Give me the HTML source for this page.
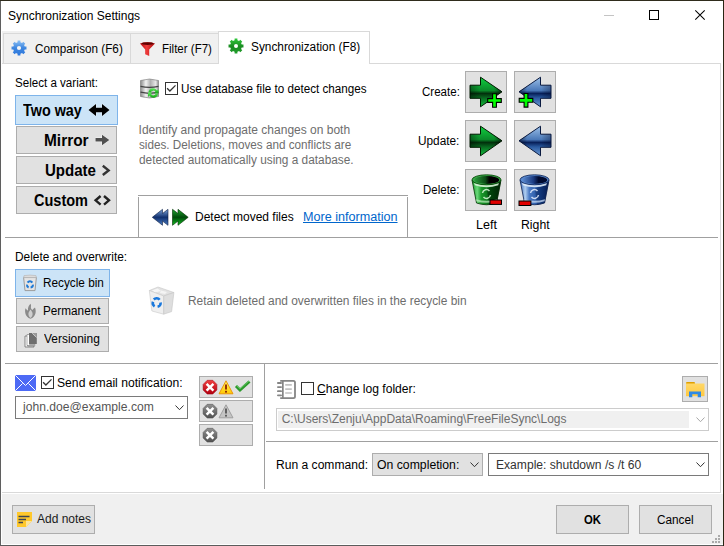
<!DOCTYPE html>
<html><head><meta charset="utf-8">
<style>
*{box-sizing:border-box}
html,body{margin:0;padding:0}
body{width:724px;height:546px;position:relative;overflow:hidden;background:#fff;font-family:"Liberation Sans",sans-serif;font-size:12px;color:#000}
.a{position:absolute}
.t{position:absolute;white-space:nowrap;font-size:12px;line-height:14px;color:#000;transform-origin:0 0}
.b{font-weight:bold;font-size:16px;line-height:18px}
.g{color:#6d6d6d}
.btn{position:absolute;background:#e1e1e1;border:1px solid #adadad}
.sel{position:absolute;background:#cce4f7;border:1px solid #7eb4ea}
.sep{position:absolute;background:#a0a0a0;height:1px}
.cb{position:absolute;width:13px;height:13px;border:1px solid #333;background:#fff}
svg{position:absolute;overflow:visible}
</style></head><body>
<!-- window frame -->
<div class="a" style="left:0;top:0;width:1px;height:546px;background:#5f5f5f"></div>
<div class="a" style="left:0;top:0;width:724px;height:1px;background:#2f2c1c"></div>
<div class="a" style="left:723px;top:0;width:1px;height:546px;background:#2a2614"></div>
<div class="a" style="left:0;top:545px;width:723px;height:1px;background:#5c5c5c"></div>

<!-- title bar -->
<div class="t" style="left:8px;top:9px">Synchronization Settings</div>
<div class="a" style="left:604px;top:15px;width:10px;height:1px;background:#c4c4c4"></div>
<div class="a" style="left:649px;top:10px;width:10px;height:10px;border:1px solid #000"></div>
<svg style="left:695px;top:10px" width="10" height="10" viewBox="0 0 10 10"><path d="M0.3 0.3L9.7 9.7M9.7 0.3L0.3 9.7" stroke="#000" stroke-width="1.05"/></svg>

<!-- tabs -->
<div class="a" style="left:2px;top:31px;width:217px;height:33px;background:#f0f0f0"></div>
<div class="a" style="left:3px;top:33px;width:128px;height:31px;border:1px solid #d9d9d9;background:#f0f0f0"></div>
<div class="a" style="left:130px;top:33px;width:89px;height:31px;border:1px solid #d9d9d9;background:#f0f0f0"></div>
<div class="a" style="left:2px;top:63px;width:719px;height:430px;border:1px solid #d9d9d9;border-left:none;background:#fff"></div>
<div class="a" style="left:218px;top:31px;width:152px;height:33px;border:1px solid #d9d9d9;border-bottom:none;background:#fff"></div>

<svg style="left:11.3px;top:40.3px" width="16" height="16" viewBox="0 0 16 16">
 <defs><linearGradient id="gb" x1="0" y1="0" x2="0" y2="1"><stop offset="0" stop-color="#8cc0f4"/><stop offset=".5" stop-color="#3d86e0"/><stop offset="1" stop-color="#2f78dc"/></linearGradient></defs>
 <path fill="url(#gb)" d="M6.58 2.27 L6.62 0.53 L9.38 0.53 L9.42 2.27 L11.04 2.95 L12.31 1.74 L14.26 3.69 L13.05 4.96 L13.73 6.58 L15.47 6.62 L15.47 9.38 L13.73 9.42 L13.05 11.04 L14.26 12.31 L12.31 14.26 L11.04 13.05 L9.42 13.73 L9.38 15.47 L6.62 15.47 L6.58 13.73 L4.96 13.05 L3.69 14.26 L1.74 12.31 L2.95 11.04 L2.27 9.42 L0.53 9.38 L0.53 6.62 L2.27 6.58 L2.95 4.96 L1.74 3.69 L3.69 1.74 L4.96 2.95Z"/>
 <circle cx="8" cy="8" r="2.1" fill="#f4f4f4"/>
</svg>
<div class="t" style="left:35px;top:42px;transform:scaleX(.975)">Comparison (F6)</div>
<svg style="left:139px;top:40px" width="17" height="17" viewBox="0 0 17 17">
 <defs><linearGradient id="fr" x1="0" y1="0" x2="1" y2="0"><stop offset="0" stop-color="#b80c10"/><stop offset=".45" stop-color="#f03c3c"/><stop offset="1" stop-color="#a80808"/></linearGradient></defs>
 <path fill="url(#fr)" d="M1 3.5 Q8.5 1 16 3.5 L10.2 9.5 L10.2 16 L6.2 14.2 L6.2 9.5Z"/>
 <ellipse cx="8.5" cy="3.6" rx="6" ry="1.4" fill="#600000"/>
</svg>
<div class="t" style="left:162px;top:42px;transform:scaleX(.96)">Filter (F7)</div>
<svg style="left:228px;top:38px" width="16" height="16" viewBox="0 0 16 16">
 <defs><linearGradient id="gg" x1="0" y1="0" x2="0" y2="1"><stop offset="0" stop-color="#2fc83a"/><stop offset=".55" stop-color="#1a8a22"/><stop offset="1" stop-color="#22a02c"/></linearGradient></defs>
 <path fill="url(#gg)" d="M6.58 2.27 L6.62 0.53 L9.38 0.53 L9.42 2.27 L11.04 2.95 L12.31 1.74 L14.26 3.69 L13.05 4.96 L13.73 6.58 L15.47 6.62 L15.47 9.38 L13.73 9.42 L13.05 11.04 L14.26 12.31 L12.31 14.26 L11.04 13.05 L9.42 13.73 L9.38 15.47 L6.62 15.47 L6.58 13.73 L4.96 13.05 L3.69 14.26 L1.74 12.31 L2.95 11.04 L2.27 9.42 L0.53 9.38 L0.53 6.62 L2.27 6.58 L2.95 4.96 L1.74 3.69 L3.69 1.74 L4.96 2.95Z"/>
 <circle cx="8" cy="8" r="2" fill="#fff"/>
</svg>
<div class="t" style="left:251.1px;top:40px;transform:scaleX(.987)">Synchronization (F8)</div>

<!-- ============ SECTION 1 ============ -->
<div class="t" style="left:15.3px;top:76px;transform:scaleX(.965)">Select a variant:</div>

<div class="sel" style="left:15px;top:95px;width:103px;height:30px"></div>
<div class="t b" style="left:23.3px;top:102px;transform:scaleX(.898)">Two way</div>
<svg style="left:88px;top:104px" width="22" height="12" viewBox="0 0 22 12"><path d="M0.5 6 L8 0 L8 3.7 L14 3.7 L14 0 L21.5 6 L14 12 L14 8.3 L8 8.3 L8 12Z" fill="#000" stroke="#fff" stroke-width=".6" stroke-opacity=".6" paint-order="stroke"/></svg>

<div class="btn" style="left:16px;top:126px;width:101px;height:28px"></div>
<div class="t b" style="left:44.4px;top:132px;transform:scaleX(.964)">Mirror</div>
<svg style="left:95px;top:134px" width="15" height="12" viewBox="0 0 15 12"><path d="M0.5 4 L7 4 L7 0.8 L14.3 6 L7 11.2 L7 7.6 L0.5 7.6Z" fill="#505050" stroke="#fafafa" stroke-width=".8" paint-order="stroke"/></svg>

<div class="btn" style="left:16px;top:156px;width:101px;height:28px"></div>
<div class="t b" style="left:44.5px;top:162px;transform:scaleX(.94)">Update</div>
<svg style="left:101px;top:164px" width="10" height="13" viewBox="0 0 10 13"><path d="M1.8 1.8 L7.6 6.4 L1.8 11" fill="none" stroke="#333" stroke-width="2.4" stroke-linejoin="miter"/></svg>

<div class="btn" style="left:16px;top:186px;width:101px;height:28px"></div>
<div class="t b" style="left:33.9px;top:192px;transform:scaleX(.907)">Custom</div>
<svg style="left:94px;top:195px" width="17" height="11" viewBox="0 0 17 11"><path d="M6.6 1 L1.6 5.3 L6.6 9.6 M10 1 L15 5.3 L10 9.6" fill="none" stroke="#222" stroke-width="2.4"/></svg>

<!-- database -->
<svg style="left:140px;top:78px" width="19" height="21" viewBox="0 0 19 21">
 <defs>
  <linearGradient id="dbg" x1="0" y1="0" x2="1" y2="0"><stop offset="0" stop-color="#8a8a8a"/><stop offset=".3" stop-color="#f2f2f2"/><stop offset=".55" stop-color="#b0b0b0"/><stop offset=".85" stop-color="#e8e8e8"/><stop offset="1" stop-color="#8a8a8a"/></linearGradient>
  <linearGradient id="sg" x1="0" y1="0" x2="0" y2="1"><stop offset="0" stop-color="#60ee60"/><stop offset="1" stop-color="#10a010"/></linearGradient>
 </defs>
 <path d="M0.5 2.5 Q9.5 -0.5 18.5 2.5 L18.5 18.5 Q9.5 21.5 0.5 18.5Z" fill="url(#dbg)" stroke="#777" stroke-width=".6"/>
 <path d="M0.5 8.3 Q9.5 10.5 18.5 8.3" fill="none" stroke="#444" stroke-width="1.3"/>
 <path d="M0.5 14.2 Q9.5 16.4 18.5 14.2" fill="none" stroke="#444" stroke-width="1.3"/>
 <path d="M8.5 14 A4.6 4.6 0 0 1 17 12.5 L18.5 11 L18.5 15.5 L14 15.5 L15.5 14 A2.6 2.6 0 0 0 10.7 14.5Z" fill="url(#sg)"/>
 <path d="M18 16 A4.6 4.6 0 0 1 9.5 17.5 L8 19 L8 14.5 L12.5 14.5 L11 16 A2.6 2.6 0 0 0 15.8 15.5Z" fill="url(#sg)"/>
</svg>
<div class="cb" style="left:165px;top:82px"></div>
<svg style="left:165px;top:82px" width="13" height="13" viewBox="0 0 13 13"><path d="M2.1 6.2 L4.9 9 L10.5 3.4" stroke="#333" stroke-width="1.3" fill="none"/></svg>
<div class="t" style="left:180.8px;top:82px;transform:scaleX(.973)">Use database file to detect changes</div>

<div class="t g" style="left:138.6px;top:123px">Identify and propagate changes on both</div>
<div class="t g" style="left:138.6px;top:138px;transform:scaleX(.976)">sides. Deletions, moves and conflicts are</div>
<div class="t g" style="left:138.6px;top:153px;transform:scaleX(.987)">detected automatically using a database.</div>

<div class="a" style="left:138px;top:195px;width:270px;height:1px;background:#a0a0a0"></div>
<div class="a" style="left:138px;top:197px;width:1px;height:40px;background:#a0a0a0"></div>
<div class="a" style="left:407px;top:197px;width:1px;height:40px;background:#a0a0a0"></div>
<svg style="left:152px;top:209px" width="17" height="17" viewBox="0 0 17 17">
 <defs><linearGradient id="bl" x1="0" y1="0" x2="0" y2="1"><stop offset="0" stop-color="#7ea6dc"/><stop offset=".5" stop-color="#10306e"/><stop offset="1" stop-color="#4a7cc4"/></linearGradient></defs>
 <path d="M0.3 8.3 L10.5 0.3 L10.5 4.5 L16 0.3 L16 16.3 L10.5 12.1 L10.5 16.3Z" fill="url(#bl)" stroke="#0c1c40" stroke-width=".6"/>
</svg>
<svg style="left:172px;top:209px" width="17" height="17" viewBox="0 0 17 17">
 <defs><linearGradient id="gr" x1="0" y1="0" x2="0" y2="1"><stop offset="0" stop-color="#20a830"/><stop offset=".5" stop-color="#004a0a"/><stop offset="1" stop-color="#10c020"/></linearGradient></defs>
 <path d="M16.2 8.3 L6 0.3 L6 4.5 L0.5 0.3 L0.5 16.3 L6 12.1 L6 16.3Z" fill="url(#gr)" stroke="#002a00" stroke-width=".6"/>
</svg>
<div class="t" style="left:195px;top:210px">Detect moved files</div>
<div class="t" style="left:302.9px;top:210px;color:#0066cc;text-decoration:underline;transform:scaleX(1.05)">More information</div>

<div class="t" style="left:421.6px;top:85px;transform:scaleX(.962)">Create:</div>
<div class="t" style="left:417.8px;top:134px;transform:scaleX(.985)">Update:</div>
<div class="t" style="left:422.7px;top:183px;transform:scaleX(.958)">Delete:</div>

<svg width="0" height="0" style="left:0;top:0">
 <defs>
  <linearGradient id="ag" x1="0" y1="0" x2="0" y2="1"><stop offset="0" stop-color="#10d040"/><stop offset=".45" stop-color="#0a8a2a"/><stop offset=".55" stop-color="#02300c"/><stop offset=".7" stop-color="#086a20"/><stop offset="1" stop-color="#14c040"/></linearGradient>
  <linearGradient id="ab" x1="0" y1="0" x2="0" y2="1"><stop offset="0" stop-color="#9cc0e8"/><stop offset=".45" stop-color="#4a78b8"/><stop offset=".55" stop-color="#08205a"/><stop offset=".7" stop-color="#2a5aa0"/><stop offset="1" stop-color="#6e9ad4"/></linearGradient>
  <linearGradient id="agh" x1="0" y1="0" x2="1" y2="0"><stop offset="0" stop-color="#000" stop-opacity=".35"/><stop offset=".3" stop-color="#000" stop-opacity="0"/><stop offset=".75" stop-color="#000" stop-opacity="0"/><stop offset="1" stop-color="#000" stop-opacity=".55"/></linearGradient>
  <linearGradient id="abh" x1="0" y1="0" x2="1" y2="0"><stop offset="0" stop-color="#000a30" stop-opacity=".55"/><stop offset=".25" stop-color="#000" stop-opacity="0"/><stop offset=".7" stop-color="#000" stop-opacity="0"/><stop offset="1" stop-color="#000a30" stop-opacity=".35"/></linearGradient>
  <linearGradient id="tg" x1="0" y1="0" x2="1" y2="0"><stop offset="0" stop-color="#1a9a2a"/><stop offset=".3" stop-color="#5ad06a"/><stop offset=".6" stop-color="#0a7a1a"/><stop offset="1" stop-color="#003a08"/></linearGradient>
  <linearGradient id="tb" x1="0" y1="0" x2="1" y2="0"><stop offset="0" stop-color="#3a6ab8"/><stop offset=".3" stop-color="#9abce8"/><stop offset=".6" stop-color="#2a5aa8"/><stop offset="1" stop-color="#0a2a6a"/></linearGradient>
 </defs>
</svg>

<div class="btn" style="left:465px;top:71px;width:42px;height:42px"></div>
<svg style="left:465px;top:71px" width="42" height="42" viewBox="0 0 42 42">
 <path d="M5 14.2 L15.5 14.2 L15.5 6.2 L37 20.8 L15.5 35.8 L15.5 27.3 L5 27.3Z" fill="url(#ag)" stroke="#001a00" stroke-width="1"/>
 <path d="M5 14.2 L15.5 14.2 L15.5 6.2 L37 20.8 L15.5 35.8 L15.5 27.3 L5 27.3Z" fill="url(#agh)"/>
 <path d="M27.6 22.7 h3.8 v4.9 h4.9 v3.8 h-4.9 v4.9 h-3.8 v-4.9 h-4.9 v-3.8 h4.9Z" fill="#00ff00" stroke="#000" stroke-width="1.1"/>
</svg>
<div class="btn" style="left:514px;top:71px;width:42px;height:42px"></div>
<svg style="left:514px;top:71px" width="42" height="42" viewBox="0 0 42 42">
 <path d="M37 14.2 L26.5 14.2 L26.5 6.2 L5 20.8 L26.5 35.8 L26.5 27.3 L37 27.3Z" fill="url(#ab)" stroke="#0a1a40" stroke-width="1"/>
 <path d="M37 14.2 L26.5 14.2 L26.5 6.2 L5 20.8 L26.5 35.8 L26.5 27.3 L37 27.3Z" fill="url(#abh)"/>
 <path d="M10.1 22.5 h3.8 v4.9 h4.9 v3.8 h-4.9 v4.9 h-3.8 v-4.9 h-4.9 v-3.8 h4.9Z" fill="#00ff00" stroke="#000" stroke-width="1.1"/>
</svg>
<div class="btn" style="left:465px;top:120px;width:42px;height:42px"></div>
<svg style="left:465px;top:120px" width="42" height="42" viewBox="0 0 42 42">
 <path d="M5 14.2 L15.5 14.2 L15.5 6.2 L37 20.8 L15.5 35.8 L15.5 27.3 L5 27.3Z" fill="url(#ag)" stroke="#001a00" stroke-width="1"/>
 <path d="M5 14.2 L15.5 14.2 L15.5 6.2 L37 20.8 L15.5 35.8 L15.5 27.3 L5 27.3Z" fill="url(#agh)"/>
</svg>
<div class="btn" style="left:514px;top:120px;width:42px;height:42px"></div>
<svg style="left:514px;top:120px" width="42" height="42" viewBox="0 0 42 42">
 <path d="M37 14.2 L26.5 14.2 L26.5 6.2 L5 20.8 L26.5 35.8 L26.5 27.3 L37 27.3Z" fill="url(#ab)" stroke="#0a1a40" stroke-width="1"/>
 <path d="M37 14.2 L26.5 14.2 L26.5 6.2 L5 20.8 L26.5 35.8 L26.5 27.3 L37 27.3Z" fill="url(#abh)"/>
</svg>
<div class="btn" style="left:465px;top:169px;width:42px;height:42px"></div>
<svg style="left:465px;top:169px" width="42" height="42" viewBox="0 0 42 42">
 <defs>
  <linearGradient id="tg2" x1="0" y1="0" x2="1" y2="0"><stop offset="0" stop-color="#1a9a2a"/><stop offset=".18" stop-color="#6ad87a"/><stop offset=".32" stop-color="#1a9a2a"/><stop offset=".7" stop-color="#005a10"/><stop offset="1" stop-color="#002a06"/></linearGradient>
  <linearGradient id="to2" x1="0" y1="0" x2="1" y2="0"><stop offset="0" stop-color="#2a9a3a"/><stop offset=".45" stop-color="#0a4a14"/><stop offset=".6" stop-color="#000"/><stop offset="1" stop-color="#000"/></linearGradient>
 </defs>
 <path d="M7 11 L11.5 34 Q21.5 37.5 31.5 34 L36 11Z" fill="url(#tg2)" stroke="#003000" stroke-width=".8"/>
 <path d="M22 20 L36 13 L32 34 Q28 35.5 24 36Z" fill="#001a04" opacity=".45"/>
 <path d="M9.3 14 Q21.5 18 33.7 14 L33.3 16.3 Q21.5 20 9.7 16.3Z" fill="#d8f4d8" opacity=".9"/>
 <path d="M11 30.2 Q21.5 33.5 32 30.2 L31.6 32.2 Q21.5 35.5 11.4 32.2Z" fill="#b8e8b8" opacity=".75"/>
 <ellipse cx="21.5" cy="10.8" rx="14.5" ry="5" fill="#3aa84a" stroke="#004000" stroke-width=".8"/>
 <ellipse cx="21.8" cy="11" rx="12.5" ry="3.9" fill="url(#to2)"/>
 <path d="M17.5 24 A4 4 0 0 1 24.5 22 M25.5 26 A4 4 0 0 1 18.5 28" fill="none" stroke="#d8f8d8" stroke-width="1.5" opacity=".85"/>
 <rect x="25" y="31" width="11.5" height="4.4" fill="#e00000" stroke="#000" stroke-width="1"/>
</svg>
<div class="btn" style="left:514px;top:169px;width:42px;height:42px"></div>
<svg style="left:514px;top:169px" width="42" height="42" viewBox="0 0 42 42">
 <defs>
  <linearGradient id="tb2" x1="0" y1="0" x2="1" y2="0"><stop offset="0" stop-color="#3a6ab8"/><stop offset=".18" stop-color="#b0cef0"/><stop offset=".32" stop-color="#4a7ac4"/><stop offset=".7" stop-color="#1a4a98"/><stop offset="1" stop-color="#08205a"/></linearGradient>
  <linearGradient id="to3" x1="0" y1="0" x2="1" y2="0"><stop offset="0" stop-color="#5a8ad0"/><stop offset=".45" stop-color="#1a3a80"/><stop offset=".65" stop-color="#000a30"/><stop offset="1" stop-color="#000a30"/></linearGradient>
 </defs>
 <path d="M6 11 L10.5 34 Q20.5 37.5 30.5 34 L35 11Z" fill="url(#tb2)" stroke="#0a2050" stroke-width=".8"/>
 <path d="M21 20 L35 13 L31 34 Q27 35.5 23 36Z" fill="#001040" opacity=".35"/>
 <path d="M8.3 14 Q20.5 18 32.7 14 L32.3 16.3 Q20.5 20 8.7 16.3Z" fill="#e0ecfa" opacity=".9"/>
 <path d="M10 30.2 Q20.5 33.5 31 30.2 L30.6 32.2 Q20.5 35.5 10.4 32.2Z" fill="#c8dcf4" opacity=".75"/>
 <ellipse cx="20.5" cy="10.8" rx="14.5" ry="5" fill="#5a8ad0" stroke="#0a2050" stroke-width=".8"/>
 <ellipse cx="20.8" cy="11" rx="12.5" ry="3.9" fill="url(#to3)"/>
 <path d="M16.5 24 A4 4 0 0 1 23.5 22 M24.5 26 A4 4 0 0 1 17.5 28" fill="none" stroke="#e8f0ff" stroke-width="1.5" opacity=".85"/>
 <rect x="5" y="32" width="11.9" height="4.5" fill="#e00000" stroke="#000" stroke-width="1"/>
</svg>
<div class="t" style="left:476.2px;top:218px;transform:scaleX(1.047)">Left</div>
<div class="t" style="left:521.2px;top:218px;transform:scaleX(1.022)">Right</div>

<div class="sep" style="left:5px;top:237px;width:713px"></div>

<!-- ============ SECTION 2 ============ -->
<div class="t" style="left:14.7px;top:250px;transform:scaleX(.989)">Delete and overwrite:</div>
<div class="sel" style="left:15px;top:269px;width:95px;height:28px"></div>
<svg style="left:23px;top:275px" width="14" height="16" viewBox="0 0 14 16">
 <path d="M0.6 2.4 L13.4 2.4 L12 15.6 L2 15.6Z" fill="#e4e4e4" stroke="#9c9c9c" stroke-width="1"/>
 <path d="M1 0.6 Q7 -0.4 13 0.6 L13.4 2.6 L0.6 2.6Z" fill="#dcdcdc" stroke="#b4b4b4" stroke-width=".6"/>
 <g fill="none" stroke="#1e7ad6" stroke-width="2">
  <path d="M4.6 7.6 A2.8 2.8 0 0 1 9.3 7.6"/>
  <path d="M9.9 9.6 A2.8 2.8 0 0 1 7.6 12.6"/>
  <path d="M5.6 12.5 A2.8 2.8 0 0 1 4 9.6"/>
 </g>
</svg>
<div class="t" style="left:42.5px;top:276px;transform:scaleX(.982)">Recycle bin</div>
<div class="btn" style="left:16px;top:298px;width:93px;height:26px"></div>
<svg style="left:24px;top:303px" width="13" height="17" viewBox="0 0 13 17">
 <path d="M6.5 0.8 C8 3.5 5.5 5 8.5 7 C9.5 5.5 10.2 5 11 4.5 C12.5 8 12 14 6.5 15.8 C1 14 0.5 8 1.5 5.2 C2.5 6.5 3 7 4 7.5 C3.5 4.5 5 2.5 6.5 0.8Z" fill="#8a8a8a"/>
 <path d="M6.5 6.5 C8.5 9 10 12 6.5 15 C3 12 4.5 9 6.5 6.5Z" fill="#cfcfcf"/>
</svg>
<div class="t" style="left:42.9px;top:304px;transform:scaleX(.979)">Permanent</div>
<div class="btn" style="left:16px;top:326px;width:93px;height:26px"></div>
<svg style="left:24px;top:332px" width="14" height="16" viewBox="0 0 14 16">
 <path d="M1 4 L3.5 4 L3.5 14 L10 14 L10 15 L1 15Z" fill="#fff" stroke="#6a6a6a" stroke-width=".8"/>
 <path d="M3 2.5 L5.5 2.5 L5.5 12.5 L11 12.5 L11 13.5 L3 13.5Z" fill="#fff" stroke="#7a7a7a" stroke-width=".6"/>
 <path d="M5 1 L8.5 1 L12.8 1 L12.8 12 L5 12Z" fill="#6e6e6e"/>
 <path d="M8.5 1 L12.8 5.3 L12.8 1Z" fill="#9a9a9a"/>
 <path d="M8.2 1.2 L12.6 5.4" stroke="#e8e8e8" stroke-width=".8"/>
</svg>
<div class="t" style="left:43.5px;top:332px;transform:scaleX(.996)">Versioning</div>

<svg style="left:149px;top:287px" width="26" height="28" viewBox="0 0 26 28">
 <path d="M0.3 3.5 L9 0 L24.9 5.5 L14.7 9Z" fill="#e2e2e2" stroke="#c8c8c8" stroke-width=".6"/>
 <path d="M3 3.5 L8.5 1.5 L12 4 L6 5.5Z" fill="#f6f6f6"/>
 <path d="M12 3.5 L18 5 L16 7 L11 6Z" fill="#f4f4f4"/>
 <path d="M0.3 3.5 L14.7 9 L14.7 27.2 L2.9 24Z" fill="#efefef" stroke="#cacaca" stroke-width=".6"/>
 <path d="M14.7 9 L24.9 5.5 L22.6 24.6 L14.7 27.2Z" fill="#dedede" stroke="#c4c4c4" stroke-width=".6"/>
 <g fill="none" stroke="#1a78dc" stroke-width="2.6">
  <path d="M4.8 12.5 A3.8 3.8 0 0 1 10.6 12.8"/>
  <path d="M11.6 15.5 A3.8 3.8 0 0 1 8.6 19.8"/>
  <path d="M5.6 19.3 A3.8 3.8 0 0 1 4 14.8"/>
 </g>
</svg>
<div class="t g" style="left:187.6px;top:294px;transform:scaleX(.992)">Retain deleted and overwritten files in the recycle bin</div>

<div class="sep" style="left:5px;top:363px;width:713px"></div>

<!-- ============ SECTION 3 ============ -->
<svg style="left:15px;top:375px" width="21" height="16" viewBox="0 0 21 16">
 <rect x="0" y="0" width="21" height="16" fill="#4d6af5"/>
 <path d="M0.3 0.3 L10.5 10.5 L20.7 0.3 M0.3 15.7 L7.5 8.5 M20.7 15.7 L13.5 8.5" stroke="#fff" stroke-width="1" fill="none"/>
</svg>
<div class="cb" style="left:41px;top:376px"></div>
<svg style="left:41px;top:376px" width="13" height="13" viewBox="0 0 13 13"><path d="M2.1 6.2 L4.9 9 L10.5 3.4" stroke="#333" stroke-width="1.3" fill="none"/></svg>
<div class="t" style="left:56.5px;top:376px;transform:scaleX(1.013)">Send email notification:</div>
<div class="a" style="left:15px;top:396px;width:173px;height:23px;border:1px solid #7a7a7a;background:#fff"></div>
<div class="t" style="left:23.3px;top:400px;color:#555;transform:scaleX(1.009)">john.doe@example.com</div>
<svg style="left:175px;top:405px" width="9" height="6" viewBox="0 0 9 6"><path d="M0.5 0.5 L4.5 4.7 L8.5 0.5" fill="none" stroke="#333" stroke-width="1"/></svg>

<div class="btn" style="left:199px;top:376px;width:54px;height:22px"></div>
<svg style="left:203px;top:380px" width="48" height="15" viewBox="0 0 48 15">
 <defs><linearGradient id="er" x1="0" y1="0" x2="0" y2="1"><stop offset="0" stop-color="#f04040"/><stop offset="1" stop-color="#b00010"/></linearGradient>
 <linearGradient id="wy" x1="0" y1="0" x2="0" y2="1"><stop offset="0" stop-color="#fff060"/><stop offset="1" stop-color="#ffc800"/></linearGradient></defs>
 <path d="M4.2 0.3 L9.8 0.3 L13.9 4.4 L13.9 10 L9.8 14.1 L4.2 14.1 L0.1 10 L0.1 4.4Z" fill="url(#er)" stroke="#a00010" stroke-width=".5"/>
 <path d="M3.6 3.8 L10.4 10.6 M10.4 3.8 L3.6 10.6" stroke="#fff" stroke-width="2.5"/>
 <path d="M23 0.8 L30 13.8 L16 13.8Z" fill="url(#wy)" stroke="#e89000" stroke-width=".9" stroke-linejoin="round"/>
 <path d="M23 4.5 L23 9.5" stroke="#8a2000" stroke-width="1.8"/>
 <rect x="22.1" y="10.8" width="1.8" height="1.8" fill="#8a2000"/>
 <path d="M33 6 L37 10 L46.5 1.5" fill="none" stroke="#2c9a2c" stroke-width="3"/>
 <path d="M33.5 5.5 L37 8.8 L46 1" fill="none" stroke="#70d070" stroke-width="1" opacity=".8"/>
</svg>
<div class="btn" style="left:199px;top:400px;width:54px;height:22px"></div>
<svg style="left:203px;top:404px" width="32" height="15" viewBox="0 0 32 15">
 <defs><linearGradient id="eg" x1="0" y1="0" x2="0" y2="1"><stop offset="0" stop-color="#909090"/><stop offset="1" stop-color="#505050"/></linearGradient></defs>
 <path d="M4.2 0.3 L9.8 0.3 L13.9 4.4 L13.9 10 L9.8 14.1 L4.2 14.1 L0.1 10 L0.1 4.4Z" fill="url(#eg)" stroke="#4a4a4a" stroke-width=".5"/>
 <path d="M3.6 3.8 L10.4 10.6 M10.4 3.8 L3.6 10.6" stroke="#fff" stroke-width="2.5"/>
 <path d="M23 0.8 L30 13.8 L16 13.8Z" fill="#c4c4c4" stroke="#9a9a9a" stroke-width=".9" stroke-linejoin="round"/>
 <path d="M23 4.5 L23 9.5" stroke="#555" stroke-width="1.8"/>
 <rect x="22.1" y="10.8" width="1.8" height="1.8" fill="#555"/>
</svg>
<div class="btn" style="left:199px;top:424px;width:54px;height:22px"></div>
<svg style="left:203px;top:428px" width="15" height="15" viewBox="0 0 15 15">
 <path d="M4.2 0.3 L9.8 0.3 L13.9 4.4 L13.9 10 L9.8 14.1 L4.2 14.1 L0.1 10 L0.1 4.4Z" fill="url(#eg)" stroke="#4a4a4a" stroke-width=".5"/>
 <path d="M3.6 3.8 L10.4 10.6 M10.4 3.8 L3.6 10.6" stroke="#fff" stroke-width="2.5"/>
</svg>

<div class="a" style="left:264px;top:364px;width:1px;height:125px;background:#a0a0a0"></div>

<svg style="left:277px;top:380px" width="19" height="19" viewBox="0 0 19 19">
 <path d="M3.2 0.9 H16.4 Q18 0.9 18 2.5 V16.5 Q18 18.1 16.4 18.1 H3.2" fill="#fff" stroke="#858585" stroke-width="1.8"/>
 <rect x="5" y="0.9" width="1.7" height="17.2" fill="#858585"/>
 <path d="M0.9 3h3.2M0.9 7.1h3.2M0.9 11.2h3.2M0.9 15.3h3.2" stroke="#858585" stroke-width="1.8" stroke-linecap="round"/>
 <path d="M8.2 4.9h6.6M8.2 9.1h6.6M8.2 13h6.6" stroke="#c2c2c2" stroke-width="1.7"/>
</svg>
<div class="cb" style="left:301px;top:382px"></div>
<div class="t" style="left:317.4px;top:382px;transform:scaleX(1.009)"><u>C</u>hange log folder:</div>
<div class="btn" style="left:682px;top:376px;width:26px;height:26px"></div>
<svg style="left:686px;top:382px" width="19" height="16" viewBox="0 0 19 16">
 <defs><linearGradient id="fy" x1="0" y1="0" x2="0" y2="1"><stop offset="0" stop-color="#ffd868"/><stop offset="1" stop-color="#ffc840"/></linearGradient></defs>
 <rect x="0" y="0" width="9" height="2.2" rx="1" fill="#e0a000"/>
 <rect x="0" y="1.5" width="18.5" height="12.7" fill="url(#fy)"/>
 <path d="M3 15.2 L3 9.5 L15 9.5 L15 15.2 L11.7 15.2 L11.7 12.3 L6.3 12.3 L6.3 15.2Z" fill="#2f8ae5"/>
</svg>
<div class="a" style="left:276px;top:408px;width:433px;height:23px;border:1px solid #cccccc;background:#fff"></div>
<div class="a" style="left:278px;top:411px;width:411px;height:17px;background:#f0f0f0"></div>
<div class="t g" style="left:281.7px;top:412px">C:\Users\Zenju\AppData\Roaming\FreeFileSync\Logs</div>
<svg style="left:696px;top:417px" width="9" height="6" viewBox="0 0 9 6"><path d="M0.5 0.5 L4.5 4.7 L8.5 0.5" fill="none" stroke="#a8a8a8" stroke-width="1"/></svg>

<div class="sep" style="left:266px;top:441px;width:452px"></div>

<div class="t" style="left:275.8px;top:458px;transform:scaleX(1.007)">Run a command:</div>
<div class="btn" style="left:372px;top:453px;width:111px;height:23px"></div>
<div class="t" style="left:376.6px;top:458px;transform:scaleX(1.02)">On completion:</div>
<svg style="left:470px;top:462px" width="9" height="6" viewBox="0 0 9 6"><path d="M0.5 0.5 L4.5 4.7 L8.5 0.5" fill="none" stroke="#333" stroke-width="1"/></svg>
<div class="a" style="left:488px;top:453px;width:221px;height:23px;border:1px solid #7a7a7a;background:#fff"></div>
<div class="t" style="left:495.9px;top:458px;color:#333;transform:scaleX(1.008)">Example: shutdown /s /t 60</div>
<svg style="left:696px;top:462px" width="9" height="6" viewBox="0 0 9 6"><path d="M0.5 0.5 L4.5 4.7 L8.5 0.5" fill="none" stroke="#333" stroke-width="1"/></svg>

<!-- ============ FOOTER ============ -->
<div class="a" style="left:2px;top:494px;width:721px;height:50px;background:#f0f0f0"></div>
<div class="btn" style="left:12px;top:505px;width:83px;height:29px"></div>
<svg style="left:17px;top:512px" width="15" height="15" viewBox="0 0 15 15">
 <path d="M0 0 H15 V9 L9 15 H0Z" fill="#ffc82c"/>
 <path d="M9 9 H15 L9 15Z" fill="#fde49a"/>
 <path d="M1.5 4.5h11M1.5 7.5h7.5M1.5 10.4h4.5" stroke="#3c4450" stroke-width="1.5"/>
</svg>
<div class="t" style="left:37px;top:512px;color:#1a1a1a">Add notes</div>
<div class="btn" style="left:556px;top:505px;width:73px;height:29px"></div>
<div class="t" style="left:584.2px;top:513px;font-weight:bold;transform:scaleX(.944)">OK</div>
<div class="btn" style="left:639px;top:505px;width:73px;height:29px"></div>
<div class="t" style="left:657.4px;top:513px;transform:scaleX(.981)">Cancel</div>
<!-- gripper -->
<div class="a" style="left:718px;top:535px;width:2px;height:2px;background:#aaa"></div>
<div class="a" style="left:715px;top:538px;width:2px;height:2px;background:#aaa"></div>
<div class="a" style="left:718px;top:538px;width:2px;height:2px;background:#aaa"></div>
<div class="a" style="left:712px;top:541px;width:2px;height:2px;background:#aaa"></div>
<div class="a" style="left:715px;top:541px;width:2px;height:2px;background:#aaa"></div>
<div class="a" style="left:718px;top:541px;width:2px;height:2px;background:#aaa"></div>
</body></html>
